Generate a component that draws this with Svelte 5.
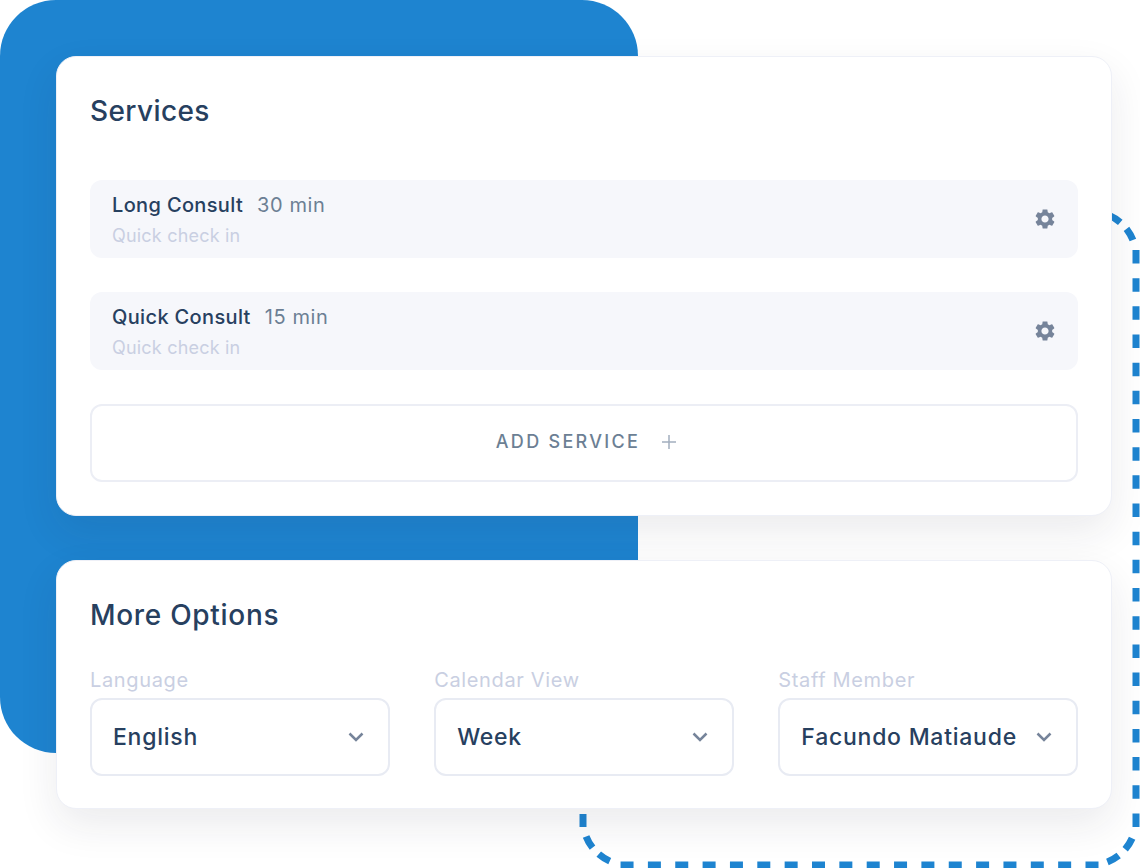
<script lang="ts">
  const services = [
    { name: 'Long Consult', time: '30 min', note: 'Quick check in' },
    { name: 'Quick Consult', time: '15 min', note: 'Quick check in' }
  ];
  const options = [
    { label: 'Language', value: 'English' },
    { label: 'Calendar View', value: 'Week' },
    { label: 'Staff Member', value: 'Facundo Matiaude' }
  ];
  // The outline spaces its dashes per side, so each straight and corner has its own pattern.
  const CORNER = '0 18.8 13 9 13 17';
  const outline = [
    { d: 'M1091 211.5a45 45 0 0 1 45 45', dash: CORNER },
    { d: 'M1136 250V827', dash: '13.5 14.67' },
    { d: 'M1136 820a45 45 0 0 1-45 45', dash: CORNER },
    { d: 'M1098.5 865H620.5', dash: '13 14.35' },
    { d: 'M628 865a45 45 0 0 1-45-45', dash: CORNER },
    { d: 'M583 827V814', dash: 'none' }
  ];
</script>

<div class="page">
  <div class="blob" aria-hidden="true"></div>
  <svg class="dashes" viewBox="0 0 1148 868" aria-hidden="true">
    {#each outline as o}
      <path d={o.d} stroke-dasharray={o.dash} />
    {/each}
  </svg>

  <section class="card services">
    <h2>Services</h2>
    <div class="list">
      {#each services as s}
        <div class="row">
          <div class="info">
            <div class="top"><strong>{s.name}</strong><span>{s.time}</span></div>
            <div class="note">{s.note}</div>
          </div>
          <svg class="gear" viewBox="0 0 24 24" aria-hidden="true">
            <path d="M19.14 12.94c.04-.3.06-.61.06-.94 0-.32-.02-.64-.07-.94l2.03-1.58c.18-.14.23-.41.12-.61l-1.92-3.32c-.12-.22-.37-.29-.59-.22l-2.39.96c-.5-.38-1.03-.7-1.62-.94l-.36-2.54c-.04-.24-.24-.41-.48-.41h-3.84c-.24 0-.43.17-.47.41l-.36 2.54c-.59.24-1.13.57-1.62.94l-2.39-.96c-.22-.08-.47 0-.59.22L2.74 8.87c-.12.21-.08.47.12.61l2.03 1.58c-.05.3-.09.63-.09.94s.02.64.07.94l-2.03 1.58c-.18.14-.23.41-.12.61l1.92 3.32c.12.22.37.29.59.22l2.39-.96c.5.38 1.03.7 1.62.94l.36 2.54c.05.24.24.41.48.41h3.84c.24 0 .44-.17.47-.41l.36-2.54c.59-.24 1.13-.56 1.62-.94l2.39.96c.22.08.47 0 .59-.22l1.92-3.32c.12-.22.07-.47-.12-.61l-2.01-1.58zM12 15.6c-1.98 0-3.6-1.62-3.6-3.6s1.62-3.6 3.6-3.6 3.6 1.62 3.6 3.6-1.62 3.6-3.6 3.6z" />
          </svg>
        </div>
      {/each}
      <div class="add">
        <span>ADD SERVICE</span>
        <svg viewBox="0 0 14 14" aria-hidden="true"><path d="M7 0V14M0 7H14" /></svg>
      </div>
    </div>
  </section>

  <section class="card more">
    <h2>More Options</h2>
    <div class="fields">
      {#each options as o}
        <div class="field">
          <div class="label">{o.label}</div>
          <div class="select">
            <span>{o.value}</span>
            <svg viewBox="0 0 16 10" aria-hidden="true"><path d="M1.5 1.5L8 8l6.5-6.5" /></svg>
          </div>
        </div>
      {/each}
    </div>
  </section>
</div>

<style>
  :global(body) {
    background: #fff;
  }

  .page {
    position: relative;
    width: 1140px;
    height: 868px;
    box-sizing: border-box;
    padding: 56px 28px 0 56px;
    overflow: hidden;
    font-family: Inter, 'Noto Sans', sans-serif;
    color: #27405f;
  }

  .blob {
    position: absolute;
    left: 0;
    top: 0;
    width: 638px;
    height: 753px;
    border-radius: 56px;
    background: #1e84d0;
  }

  .dashes {
    position: absolute;
    left: 0;
    top: 0;
    width: 1148px;
    height: 868px;
  }

  .dashes path {
    fill: none;
    stroke: #1e84d0;
    stroke-width: 7;
  }

  .card {
    position: relative;
    box-sizing: border-box;
    padding: 0 33px;
    border: 1px solid #eef0f7;
    border-radius: 20px;
    background: #fff;
    box-shadow: 0 16px 40px rgba(30, 35, 60, 0.09);
  }

  .services {
    height: 460px;
    margin-bottom: 44px;
  }

  .more {
    height: 249px;
  }

  h2 {
    margin: 0;
    padding-top: 37px;
    font-size: 28px;
    font-weight: 500;
    line-height: 34px;
    letter-spacing: 0.4px;
  }

  .more h2 {
    letter-spacing: 0.7px;
  }

  .list {
    display: flex;
    flex-direction: column;
    gap: 34px;
    margin-top: 52px;
  }

  .row {
    display: flex;
    align-items: center;
    justify-content: space-between;
    height: 78px;
    box-sizing: border-box;
    padding: 0 21px 0 22px;
    border-radius: 12px;
    background: #f6f7fb;
  }

  .top {
    display: flex;
    gap: 14px;
    font-size: 20px;
    line-height: 26px;
  }

  .top strong {
    font-weight: 500;
    letter-spacing: 0.35px;
  }

  .top span {
    color: #6c7f94;
    letter-spacing: 0.6px;
  }

  .note {
    margin-top: 7px;
    color: #c9cfe2;
    font-size: 18px;
    line-height: 22px;
    letter-spacing: 0.2px;
  }

  .gear {
    width: 24px;
    height: 24px;
    fill: #76849a;
  }

  .add {
    display: flex;
    align-items: center;
    justify-content: center;
    gap: 22px;
    height: 78px;
    box-sizing: border-box;
    padding: 0 0 3px 4px;
    border: 2px solid #eceef5;
    border-radius: 12px;
    color: #6c7f94;
    font-size: 18px;
    font-weight: 500;
    letter-spacing: 2.3px;
  }

  .add svg {
    width: 14px;
    height: 14px;
    fill: none;
    stroke: #a3afbf;
    stroke-width: 1.5;
  }

  .fields {
    display: grid;
    grid-template-columns: repeat(3, 1fr);
    gap: 44.5px;
    margin-top: 35px;
  }

  .label {
    margin-bottom: 5px;
    color: #c9cfe2;
    font-size: 20px;
    line-height: 26px;
    letter-spacing: 0.65px;
  }

  .select {
    display: flex;
    align-items: center;
    justify-content: space-between;
    height: 78px;
    box-sizing: border-box;
    padding: 0 24px 0 21px;
    border: 2px solid #e8ebf3;
    border-radius: 12px;
    font-size: 23px;
    font-weight: 500;
    letter-spacing: 0.75px;
  }

  .select svg {
    width: 16px;
    height: 10px;
    fill: none;
    stroke: #76849a;
    stroke-width: 2.5;
  }
</style>
